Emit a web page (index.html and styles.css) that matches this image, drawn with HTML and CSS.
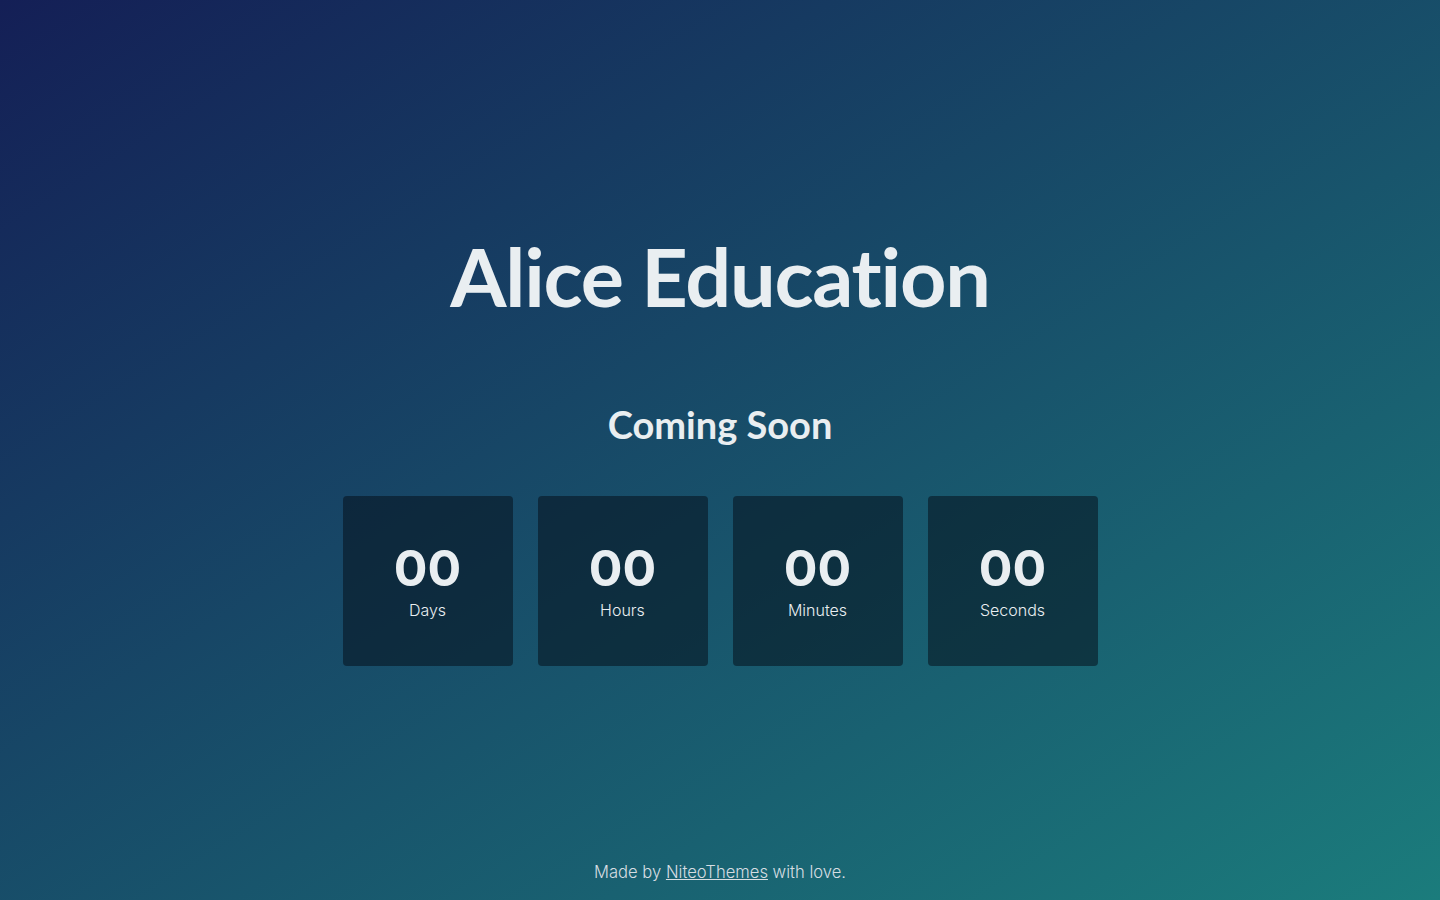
FILE: index.html
```html
<!DOCTYPE html>
<html lang="en">
<head>
<meta charset="utf-8">
<title>Alice Education - Coming Soon</title>
<link rel="stylesheet" href="styles.css">
</head>
<body>
<main class="page">
  <section class="hero">
    <h1 class="title">Alice Education</h1>
    <h2 class="subtitle">Coming Soon</h2>
    <div class="countdown">
      <div class="unit"><span class="num">00</span><span class="label">Days</span></div>
      <div class="unit"><span class="num">00</span><span class="label">Hours</span></div>
      <div class="unit"><span class="num">00</span><span class="label">Minutes</span></div>
      <div class="unit"><span class="num">00</span><span class="label">Seconds</span></div>
    </div>
  </section>
  <footer class="footer">Made by <a href="#">NiteoThemes</a> with love.</footer>
</main>
</body>
</html>
```
FILE: styles.css
```css
html, body {
  margin: 0;
  padding: 0;
  height: 100%;
}
body {
  background: linear-gradient(to bottom right, #141f56, #1b7c7c);
  color: #e9eef1;
  font-family: "Inter", "Liberation Sans", sans-serif;
}
.page {
  height: 900px;
  display: flex;
  flex-direction: column;
  align-items: center;
  box-sizing: border-box;
}
.hero {
  flex: 1;
  display: flex;
  flex-direction: column;
  align-items: center;
  padding-top: 234px;
}
.title {
  margin: 0;
  font-family: "Lato", sans-serif;
  font-weight: 700;
  font-size: 81px;
  line-height: 84px;
  letter-spacing: -1.2px;
}
.subtitle {
  margin: 86px 0 0;
  font-family: "Lato", sans-serif;
  font-weight: 700;
  font-size: 38px;
  line-height: 40px;
}
.countdown {
  margin-top: 52px;
  display: flex;
  gap: 25px;
}
.unit {
  width: 170px;
  height: 170px;
  background: rgba(6, 16, 28, 0.55);
  border-radius: 4px;
  display: flex;
  flex-direction: column;
  align-items: center;
  justify-content: center;
}
.num {
  font-family: "Inter", sans-serif;
  font-weight: 700;
  font-size: 50px;
  line-height: 50px;
  margin-top: 2px;
}
.label {
  font-family: "Inter", sans-serif;
  font-weight: 300;
  font-size: 16px;
  line-height: 22px;
  margin-top: 6px;
}
.footer {
  padding-bottom: 16px;
  font-family: "Inter", sans-serif;
  font-weight: 300;
  font-size: 16.6px;
  line-height: 24px;
  color: #d6dde2;
}
.footer a {
  color: #d6dde2;
}
```
